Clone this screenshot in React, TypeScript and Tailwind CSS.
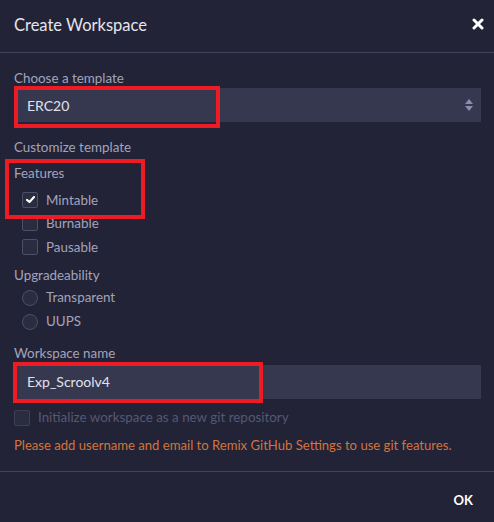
import React from "react";

const font = { fontFamily: "Lato, 'Open Sans', sans-serif" };

function Check({ checked, disabled }: { checked?: boolean; disabled?: boolean }) {
  return (
    <div
      className={`w-[16px] h-[16px] rounded-[2px] border flex items-center justify-center ${
        disabled ? "border-[#3d3f58] bg-[#2a2c40]" : "border-[#4d4f69] bg-[#2a2c40]"
      }`}
    >
      {checked && (
        <svg width="9" height="7" viewBox="0 0 10 8">
          <path d="M1 4.4 L3.8 6.8 L9 1.2" fill="none" stroke="#ffffff" strokeWidth="2.4" strokeLinecap="round" strokeLinejoin="round" />
        </svg>
      )}
    </div>
  );
}

function Radio() {
  return <div className="w-[16px] h-[16px] rounded-full border border-[#4d4f69] bg-[#2a2c40]" />;
}

export default function App() {
  return (
    <div className="relative w-[494px] h-[522px] bg-[#222336] flex flex-col text-[#a2a3bd]" style={font}>
      <div className="h-[53px] pl-[14px] pr-[10px] flex items-center justify-between border-b border-[#41435c] shrink-0">
        <span className="text-[16.5px] text-[#e4e5ee] mt-[-1px]">Create Workspace</span>
        <svg width="12" height="12" viewBox="0 0 12 12" className="mt-[-4px]">
          <path d="M2 2 L10 10 M10 2 L2 10" stroke="#ffffff" strokeWidth="3" strokeLinecap="round" />
        </svg>
      </div>
      <div className="px-[14px] pt-[15px] flex flex-col text-[13.4px]">
        <div className="h-[20px] leading-[20px]">Choose a template</div>
        <div className="mt-[0px] h-[34px] w-[467px] bg-[#363850] flex items-center justify-between pl-[13px] pr-[8px]">
          <span className="text-[#e1e2ec] text-[14px]">ERC20</span>
          <svg width="8" height="12" viewBox="0 0 8 12">
            <path d="M0 5 L4 0 L8 5 Z" fill="#8b8dae" />
            <path d="M0 7 L4 12 L8 7 Z" fill="#8b8dae" />
          </svg>
        </div>
        <div className="mt-[15px] h-[20px] leading-[20px]">Customize template</div>
        <div className="mt-[6px] h-[20px] leading-[20px]">Features</div>
        <div className="mt-[5px] flex flex-col pl-[8px]">
          <div className="h-[23.5px] flex items-center gap-[8px]">
            <Check checked />
            <span>Mintable</span>
          </div>
          <div className="h-[23.5px] flex items-center gap-[8px]">
            <Check />
            <span>Burnable</span>
          </div>
          <div className="h-[23.5px] flex items-center gap-[8px]">
            <Check />
            <span>Pausable</span>
          </div>
        </div>
        <div className="mt-[6px] h-[20px] leading-[20px]">Upgradeability</div>
        <div className="mt-[1px] flex flex-col pl-[8px]">
          <div className="h-[24px] flex items-center gap-[8px]">
            <Radio />
            <span>Transparent</span>
          </div>
          <div className="h-[24px] flex items-center gap-[8px]">
            <Radio />
            <span>UUPS</span>
          </div>
        </div>
        <div className="mt-[9px] h-[20px] leading-[20px]">Workspace name</div>
        <div className="mt-[2px] h-[34px] w-[467px] bg-[#363850] flex items-center pl-[13px]">
          <span className="text-[#e1e2ec] text-[14px]">Exp_Scroolv4</span>
        </div>
        <div className="mt-[10px] h-[18px] flex items-center gap-[8px]">
          <Check disabled />
          <span className="text-[#565872]">Initialize workspace as a new git repository</span>
        </div>
        <div className="mt-[8px] h-[20px] leading-[20px] text-[#d4743c] text-[13.1px] whitespace-nowrap">
          Please add username and email to Remix GitHub Settings to use git features.
        </div>
      </div>
      <div className="mt-auto h-[51px] border-t border-[#41435c] flex items-center justify-end pr-[21px] shrink-0">
        <span className="text-[13px] font-bold text-[#ffffff] mt-[8px]">OK</span>
      </div>

      <div className="absolute left-[14px] top-[86px] w-[206px] h-[42px] border-[4px] border-[#ed1c24] pointer-events-none" />
      <div className="absolute left-[5px] top-[159px] w-[140px] h-[60px] border-[4px] border-[#ed1c24] pointer-events-none" />
      <div className="absolute left-[13px] top-[362px] w-[250px] h-[41px] border-[4px] border-[#ed1c24] pointer-events-none" />
    </div>
  );
}
